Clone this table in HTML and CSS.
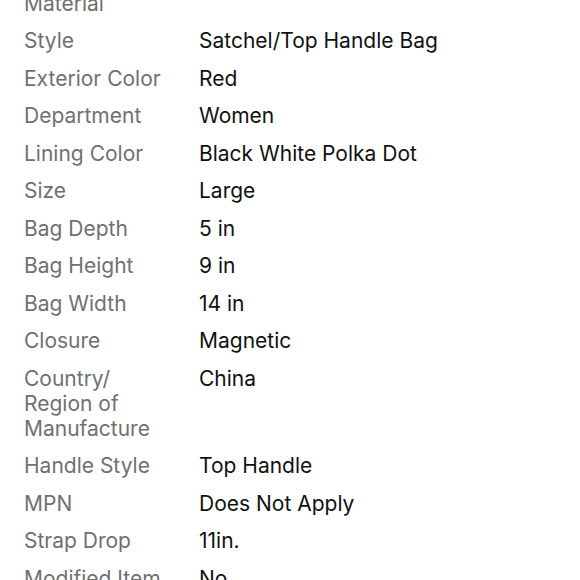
FILE: index.html
```html
<!DOCTYPE html>
<html>
<head>
<meta charset="utf-8">
<link rel="stylesheet" href="styles.css">
</head>
<body>
<dl class="specs">
  <div class="row"><dt>Material</dt><dd></dd></div>
  <div class="row"><dt>Style</dt><dd>Satchel/Top Handle Bag</dd></div>
  <div class="row"><dt>Exterior Color</dt><dd>Red</dd></div>
  <div class="row"><dt>Department</dt><dd>Women</dd></div>
  <div class="row"><dt>Lining Color</dt><dd>Black White Polka Dot</dd></div>
  <div class="row"><dt>Size</dt><dd>Large</dd></div>
  <div class="row"><dt>Bag Depth</dt><dd>5 in</dd></div>
  <div class="row"><dt>Bag Height</dt><dd>9 in</dd></div>
  <div class="row"><dt>Bag Width</dt><dd>14 in</dd></div>
  <div class="row"><dt>Closure</dt><dd>Magnetic</dd></div>
  <div class="row"><dt>Country/ Region of Manufacture</dt><dd>China</dd></div>
  <div class="row"><dt>Handle Style</dt><dd>Top Handle</dd></div>
  <div class="row"><dt>MPN</dt><dd>Does Not Apply</dd></div>
  <div class="row"><dt>Strap Drop</dt><dd>11in.</dd></div>
  <div class="row"><dt>Modified Item</dt><dd>No</dd></div>
</dl>
</body>
</html>
```
FILE: styles.css
```css
html, body {
  margin: 0;
  padding: 0;
  background: #fff;
  overflow: hidden;
  height: 580px;
}
body {
  font-family: Inter, "Open Sans", sans-serif;
  font-size: 21px;
  line-height: 25px;
}
.specs {
  margin: -9.5px 0 0 0;
  padding: 0 0 0 24px;
  display: flex;
  flex-direction: column;
  gap: 12.5px;
}
.row {
  display: grid;
  grid-template-columns: 175px 1fr;
}
dt {
  color: #707070;
  max-width: 150px;
  margin: 0;
}
dd {
  margin: 0;
  color: #111;
}
```
